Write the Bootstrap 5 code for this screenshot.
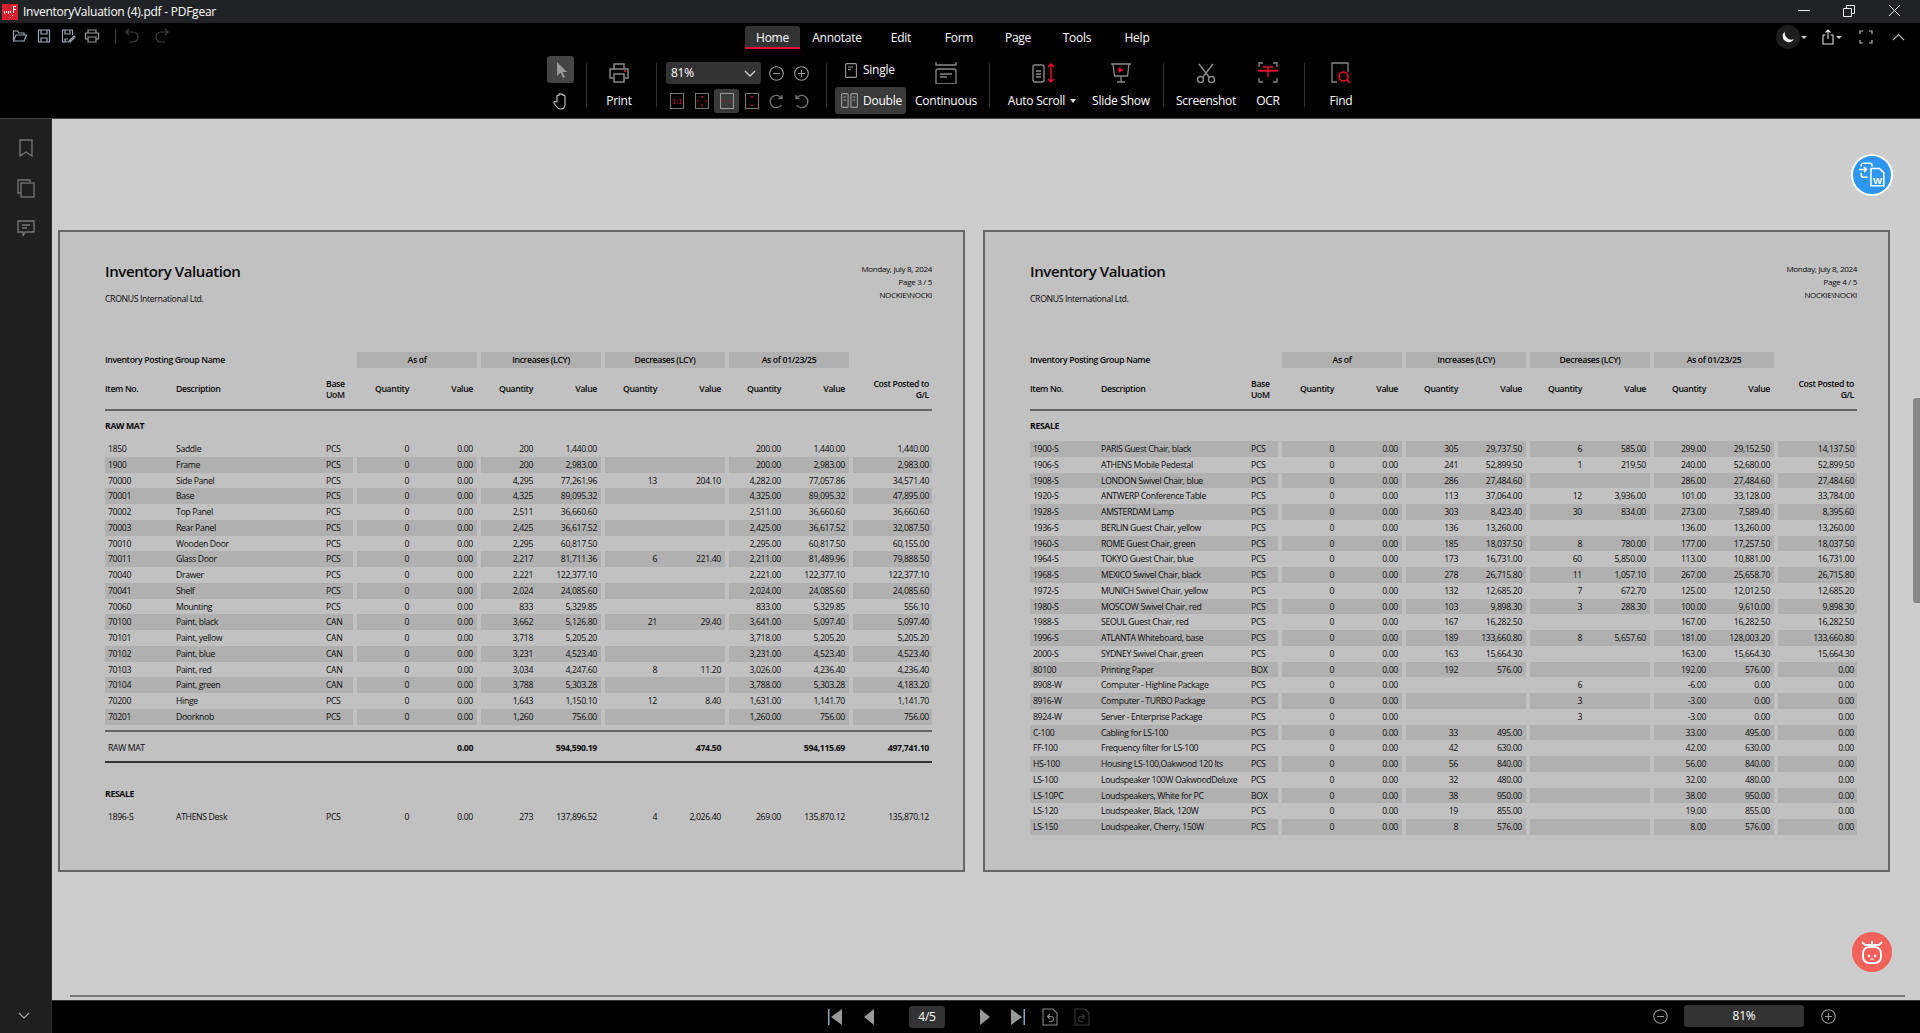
<!DOCTYPE html>
<html lang="en">

<head>
    <meta charset="UTF-8" />
    <title>InventoryValuation (4).pdf - PDFgear</title>
    <link href="https://cdn.jsdelivr.net/npm/bootstrap@5.3.2/dist/css/bootstrap.min.css" rel="stylesheet" />
    <style>
        html, body { height: 100%; }
        body { background: #000; color: #fff; font-family: "Open Sans", "Liberation Sans", sans-serif; font-size: 12px; letter-spacing: -.25px; overflow: hidden; }
        svg { display: block; }

        /* title bar */
        .title-bar { height: 23px; background: #1f2325; padding-left: 2px; }
        .title-text { font-size: 12px; margin-left: 5px; white-space: nowrap; }
        .win-btn { position: absolute; top: 3px; }
        .win-min { left: 1797px; }
        .win-max { left: 1842px; }
        .win-close { left: 1887px; }

        /* top area */
        .tool-area { height: 96px; background: #000; border-bottom: 1px solid #444; }
        .menu-row { height: 27px; }
        .quick { width: 745px; padding-left: 12px; padding-top: 5px; }
        .quick-btn { width: 24px; }
        .quick-sep { width: 1px; height: 15px; background: #444; margin: 1px 8px 0 7px; }
        .quick-wide { width: 30px; }
        .menu-tabs { margin-top: 3px; flex-wrap: nowrap; }
        .menu-tabs .nav-link { color: #fff; padding: 1px 0 0; height: 23px; line-height: 22px; text-align: center; font-size: 12px; }
        .menu-tabs .nav-link.active { background: #333; border-bottom: 2px solid #e8112d; border-radius: 3px 3px 0 0; }
        .tab-home { width: 55px; }
        .tab-annotate { width: 74px; }
        .tab-edit { width: 54px; }
        .tab-form { width: 62px; }
        .tab-page { width: 56px; }
        .tab-tools { width: 62px; }
        .tab-help { width: 58px; }
        .right-tools { position: absolute; top: 3px; left: 1776px; height: 22px; }
        .moon-btn { width: 24px; height: 24px; border-radius: 50%; background: #1d1d1d; }
        .caret-mini { width: 0; height: 0; flex: none; margin-left: 1px; border: 3px solid transparent; border-top: 3px solid #ccc; border-bottom: 0; }
        .share-icon { margin-left: 14px; }
        .full-icon { margin-left: 17px; }
        .up-icon { margin-left: 19px; }

        /* ribbon */
        .ribbon { height: 68px; padding-left: 547px; }
        .rb-sep { width: 1px; height: 44px; margin-top: 13px; background: #333; flex: none; }
        .rb-item { flex: none; height: 68px; padding-top: 12px; }
        .rb-icon { height: 22px; }
        .rb-label { margin-top: 8px; line-height: 18px; white-space: nowrap; }
        .rb-tools { width: 27px; margin-right: 12px; flex: none; padding-top: 6px; }
        .pointer-btn { width: 27px; height: 27px; background: #444; border-radius: 3px; }
        .hand-btn { height: 24px; margin-top: 6px; }
        .rb-print { width: 46px; margin: 0 14px 0 9px; }
        .rb-zoom { width: 150px; margin: 0 12px 0 7px; flex: none; padding-top: 12px; }
        .zoom-select { width: 95px; height: 22px; flex: none; margin-left: 2px; margin-right: 5px; padding: 0 5px; background: #333; border-radius: 3px; }
        .zoom-circle { width: 20px; flex: none; margin-right: 5px; }
        .zoom-modes { margin-top: 5px; }
        .mode-btn { width: 25px; height: 24px; border-radius: 3px; }
        .mode-btn.on { background: #3a3a3a; }
        .rb-view { width: 71px; margin-left: 8px; flex: none; padding-top: 9px; }
        .view-single { height: 22px; padding-left: 10px; gap: 6px; }
        .view-double { height: 27px; margin-top: 6px; padding-left: 6px; gap: 5px; background: #3a3a3a; border-radius: 3px; }
        .rb-cont { width: 80px; margin-right: 3px; }
        .rb-auto { width: 78px; margin-left: 13px; }
        .rb-slide { width: 62px; margin: 0 11px 0 9px; }
        .rb-shot { width: 58px; margin-left: 13px; }
        .rb-ocr { width: 24px; margin: 0 24px 0 21px; }
        .rb-find { width: 22px; margin-left: 25px; }
        .caret-auto { display: inline-block; width: 0; height: 0; margin-left: 5px; vertical-align: 2px; border: 3px solid transparent; border-top: 4px solid #ddd; border-bottom: 0; }

        /* sidebar and canvas */
        .side-bar { width: 52px; flex: none; background: #1f1f1f; border-right: 1px solid #333; padding-top: 18px; gap: 18.500px; position: relative; }
        .side-btn { height: 22px; }
        .side-down { position: absolute; bottom: 13px; left: 18px; }
        .canvas-area { height: 881px; background: #cdcdcd; padding: 111px 0 0 6px; gap: 18px; position: relative; overflow: hidden; }
        .h-scroll { position: absolute; left: 18px; right: 15px; bottom: 3px; height: 2px; background: #777; }
        .v-scroll { position: absolute; right: 0; top: 279px; width: 7px; height: 205px; background: #888; border-radius: 3px 0 0 3px; }
        .float-blue { position: absolute; left: 1799px; top: 35px; width: 42px; height: 42px; border-radius: 50%; background: #2d96f0; border: 2px solid #fff; }
        .float-red { position: absolute; left: 1800px; top: 813px; width: 40px; height: 40px; border-radius: 50%; background: #f4605a; }

        /* pdf pages */
        .pdf-page { width: 907px; height: 642px; flex: none; background: #c1c1c1; border: 2px solid #666; padding-left: 45px; color: #0a0a0a; font-size: 8.7px; letter-spacing: -.35px; line-height: 12px; }
        .pdf-sheet { width: 827px; }
        .pdf-head { height: 120px; padding-top: 29px; }
        .pdf-title { font-size: 15px; letter-spacing: -.4px; line-height: 20px; font-weight: 600; }
        .pdf-company { margin-top: 12px; }
        .pdf-meta { padding-top: 1px; line-height: 13px; font-size: 8px; letter-spacing: -.3px; }
        .tbl-row { display: flex; gap: 4px; height: 15.76px; line-height: 17.5px; white-space: nowrap; }
        .grp-info { width: 248px; flex: none; display: flex; }
        .grp-num { width: 120px; flex: none; display: flex; }
        .grp-cost { width: 79px; flex: none; padding-right: 3px; text-align: right; }
        .cell-no { width: 71px; padding-left: 3px; flex: none; }
        .cell-desc { width: 150px; flex: none; }
        .cell-uom { width: 27px; flex: none; }
        .cell-q { width: 56px; padding-right: 4px; text-align: right; flex: none; }
        .cell-v { width: 64px; padding-right: 4px; text-align: right; flex: none; }
        .tbl-row.shaded .grp-info, .tbl-row.shaded .grp-num, .tbl-row.shaded .grp-cost { background: #b0b0b0; }
        .group-head { height: 16px; line-height: 16px; font-weight: 600; }
        .group-cap { width: 120px; flex: none; background: #b0b0b0; text-align: center; }
        .group-name { width: 248px; flex: none; }
        .col-head { height: 41px; padding-top: 2px; display: flex; gap: 4px; align-items: center; font-weight: 600; line-height: 11px; }
        .col-head .cell-no { padding-left: 0; }
        .rule-thick { height: 2px; background: #666; }
        .rule-black { height: 2px; background: #333; }
        .sec-name { height: 30px; line-height: 30px; font-weight: 700; }
        .sec-after { margin-top: 16px; }
        .sum-top { margin-top: 5.5px; }
        .sum-row { height: 29px; line-height: 32px; }
        .sum-row b { font-weight: 700; }

        /* bottom bar */
        .bottom-bar { height: 33px; background: #000; border-top: 1px solid #333; position: relative; padding-left: 773px; }
        .nav-slot { width: 20px; flex: none; }
        .nav-prev { margin-left: 15px; }
        .nav-page { width: 36px; height: 22px; margin: 0 29px; flex: none; background: #333; border-radius: 3px; text-align: center; line-height: 22px; font-size: 12px; }
        .nav-last { margin-left: 14px; }
        .nav-doc { margin-left: 14px; }
        .nav-doc2 { margin-left: 12px; }
        .zoom-foot { position: absolute; left: 1598px; top: 4px; gap: 14px; }
        .zoom-box { width: 120px; height: 22px; background: #333; border-radius: 3px; text-align: center; line-height: 22px; font-size: 12px; }
    </style>
</head>

<body class="d-flex flex-column">
    <div class="title-bar d-flex align-items-center position-relative">
        <svg width="16" height="16" viewBox="0 0 16 16">
            <rect width="16" height="16" fill="#d9202c" />
            <path d="M2 7h1v3H2zM4 7h1v2H4zM6 7h1v3H6zM8 7h1v2H8zM11 2h3v1h-2v2h2v1h-2v3h-1zM8 13h1v1H8zM10 11h1v1h-1z" fill="#fff" />
        </svg>
        <span class="title-text">InventoryValuation (4).pdf - PDFgear</span>
        <svg class="win-btn win-min" width="16" height="16" viewBox="0 0 16 16"><path d="M1 7.5h12" stroke="#eee" fill="none" /></svg>
        <svg class="win-btn win-max" width="16" height="16" viewBox="0 0 16 16"><path d="M1.5 5.5h8v8h-8zM4.5 5V2.5h8v8H10" stroke="#eee" fill="none" /></svg>
        <svg class="win-btn win-close" width="16" height="16" viewBox="0 0 16 16"><path d="M2 2l11 11M13 2L2 13" stroke="#eee" fill="none" /></svg>
    </div>

    <div class="tool-area position-relative">
        <div class="menu-row d-flex">
            <div class="quick d-flex">
                <div class="quick-btn"><svg width="16" height="16" viewBox="0 0 16 16" fill="none" stroke="#9aa7b5" stroke-width="1.2"><path d="M1.5 13V3h4l1.5 2h5v2M1.5 13l2.5-6h10.5L12 13z" /></svg></div>
                <div class="quick-btn"><svg width="16" height="16" viewBox="0 0 16 16" fill="none" stroke="#9aa7b5" stroke-width="1.2"><path d="M2.5 2h11v12h-11zM5 2v4h6V2M5 14v-4h6v4" /></svg></div>
                <div class="quick-btn"><svg width="16" height="16" viewBox="0 0 16 16" fill="none" stroke="#9aa7b5" stroke-width="1.2"><path d="M9 14H2.5V2h10v5M5 2v4h5V2M5 14v-3h3M10 14l5-5-1-1-5 5z" /></svg></div>
                <div class="quick-btn"><svg width="16" height="16" viewBox="0 0 16 16" fill="none" stroke="#9a9a9a" stroke-width="1.2"><path d="M4 5V2h8v3M4 11H1.5V5h13v6H12M4 9h8v5H4z" /></svg></div>
                <div class="quick-sep"></div>
                <div class="quick-wide"><svg width="16" height="16" viewBox="0 0 16 16" fill="none" stroke="#3f3f3f" stroke-width="1.2"><path d="M5 1L2 4l3 3M2 4h7a4.5 4.5 0 0 1 0 10H5" /></svg></div>
                <div class="quick-wide"><svg width="16" height="16" viewBox="0 0 16 16" fill="none" stroke="#3f3f3f" stroke-width="1.2"><path d="M11 1l3 3-3 3M14 4H7a4.5 4.5 0 0 0 0 10h4" /></svg></div>
            </div>
            <ul class="nav menu-tabs">
                <li class="nav-item"><a class="nav-link active tab-home" href="#">Home</a></li>
                <li class="nav-item"><a class="nav-link tab-annotate" href="#">Annotate</a></li>
                <li class="nav-item"><a class="nav-link tab-edit" href="#">Edit</a></li>
                <li class="nav-item"><a class="nav-link tab-form" href="#">Form</a></li>
                <li class="nav-item"><a class="nav-link tab-page" href="#">Page</a></li>
                <li class="nav-item"><a class="nav-link tab-tools" href="#">Tools</a></li>
                <li class="nav-item"><a class="nav-link tab-help" href="#">Help</a></li>
            </ul>
            <div class="right-tools d-flex align-items-center">
                <div class="moon-btn d-flex align-items-center justify-content-center"><svg width="16" height="16" viewBox="0 0 16 16"><path d="M5 2.5a6 6 0 1 0 9 7.5A6.5 6.5 0 0 1 5 2.5z" fill="#eee" /></svg></div>
                <div class="caret-mini"></div>
                <svg class="share-icon" width="14" height="16" viewBox="0 0 14 16" fill="none" stroke="#ddd" stroke-width="1.1"><path d="M7 10V1M4.5 3.5L7 1l2.5 2.5M4.5 6H2v9h10V6H9.5" /></svg>
                <div class="caret-mini"></div>
                <svg class="full-icon" width="14" height="14" viewBox="0 0 14 14" fill="none" stroke="#bbb" stroke-width="1.2"><path d="M1 4V1h3M10 1h3v3M13 10v3h-3M4 13H1v-3" /></svg>
                <svg class="up-icon" width="13" height="8" viewBox="0 0 13 8" fill="none" stroke="#bbb" stroke-width="1.1"><path d="M1 7l5.500-5.500L12 7" /></svg>
            </div>
        </div>

        <div class="ribbon d-flex">
            <div class="rb-tools">
                <div class="pointer-btn d-flex align-items-center justify-content-center"><svg width="18" height="20" viewBox="0 0 18 20"><path d="M5 2v14l3.500-3.500L11 18l2-1-2.500-5H15z" fill="#999" /></svg></div>
                <div class="hand-btn d-flex align-items-center justify-content-center"><svg width="18" height="19" viewBox="0 0 18 19" fill="none" stroke="#bbb" stroke-width="1.2"><path d="M5 10V4a1 1 0 0 1 2 0V2.500a1 1 0 0 1 2 0V3a1 1 0 0 1 2 0v1a1 1 0 0 1 2 0v8c0 3-1.500 5-4 5H8c-2 0-3-1.500-4-3l-2-3c-.5-1 .8-2 1.700-1z" /></svg></div>
            </div>
            <div class="rb-sep"></div>
            <div class="rb-item rb-print d-flex flex-column align-items-center">
                <div class="rb-icon"><svg width="22" height="22" viewBox="0 0 22 22" fill="none" stroke="#888" stroke-width="1.500"><path d="M6 7V2h10v5M6 16H2V7h18v9h-4M6 12h10v8H6z" /><path d="M16 9h2" stroke="#e8112d" /></svg></div>
                <div class="rb-label">Print</div>
            </div>
            <div class="rb-sep"></div>
            <div class="rb-zoom">
                <div class="d-flex">
                    <div class="zoom-select d-flex align-items-center justify-content-between">
                        <span>81%</span>
                        <svg width="12" height="7" viewBox="0 0 12 7" fill="none" stroke="#ccc" stroke-width="1.3"><path d="M1 1l5 5 5-5" /></svg>
                    </div>
                    <div class="zoom-circle d-flex align-items-center justify-content-center"><svg width="15" height="15" viewBox="0 0 15 15" fill="none" stroke="#999" stroke-width="1.1"><circle cx="7.500" cy="7.500" r="6.800" /><path d="M4 7.500h7" /></svg></div>
                    <div class="zoom-circle d-flex align-items-center justify-content-center"><svg width="15" height="15" viewBox="0 0 15 15" fill="none" stroke="#999" stroke-width="1.1"><circle cx="7.500" cy="7.500" r="6.800" /><path d="M4 7.500h7M7.500 4v7" /></svg></div>
                </div>
                <div class="zoom-modes d-flex">
                    <div class="mode-btn d-flex align-items-center justify-content-center"><svg width="14" height="16" viewBox="0 0 14 16"><rect x=".5" y=".5" width="13" height="15" fill="none" stroke="#777" /><text x="7" y="11" text-anchor="middle" font-size="8" font-family="Liberation Sans" fill="#c8102a">1:1</text></svg></div>
                    <div class="mode-btn d-flex align-items-center justify-content-center"><svg width="14" height="16" viewBox="0 0 14 16"><rect x=".5" y=".5" width="13" height="15" fill="none" stroke="#777" /><path d="M6 3h2v1.500H6zM6 11.500h2V13H6zM2.500 7.200H4v1.600H2.500zM10 7.200h1.500v1.600H10z" fill="#b00f25" /></svg></div>
                    <div class="mode-btn on d-flex align-items-center justify-content-center"><svg width="14" height="16" viewBox="0 0 14 16"><rect x=".5" y=".5" width="13" height="15" fill="none" stroke="#999" /><path d="M2.500 7.200H4v1.600H2.500zM10 7.200h1.500v1.600H10z" fill="#b00f25" /></svg></div>
                    <div class="mode-btn d-flex align-items-center justify-content-center"><svg width="14" height="16" viewBox="0 0 14 16"><rect x=".5" y=".5" width="13" height="15" fill="none" stroke="#777" /><path d="M6 3h2v1.500H6zM6 11.500h2V13H6z" fill="#b00f25" /></svg></div>
                    <div class="mode-btn d-flex align-items-center justify-content-center"><svg width="15" height="15" viewBox="0 0 15 15" fill="none" stroke="#777" stroke-width="1.300"><path d="M12.500 11a6.200 6.200 0 1 1 0-7M13 1v3.500H9.500" /></svg></div>
                    <div class="mode-btn d-flex align-items-center justify-content-center"><svg width="15" height="15" viewBox="0 0 15 15" fill="none" stroke="#777" stroke-width="1.300"><path d="M2.500 11a6.200 6.200 0 1 0 0-7M2 1v3.500h3.500" /></svg></div>
                </div>
            </div>
            <div class="rb-sep"></div>
            <div class="rb-view">
                <div class="view-single d-flex align-items-center">
                    <svg width="12" height="15" viewBox="0 0 12 15" fill="none" stroke="#999" stroke-width="1.100"><rect x=".6" y=".6" width="10.800" height="13.800" rx="1" /><path d="M3 4h5M3 6.500h3" /></svg>
                    <span>Single</span>
                </div>
                <div class="view-double d-flex align-items-center">
                    <svg width="17" height="15" viewBox="0 0 17 15" fill="none" stroke="#999" stroke-width="1.100"><rect x=".6" y=".6" width="6.500" height="13.800" rx="1" /><rect x="9.900" y=".6" width="6.500" height="13.800" rx="1" /><path d="M2.500 4h2.500M2.500 7h2.500M11.800 4h2.500M11.800 7h2.500" /></svg>
                    <span>Double</span>
                </div>
            </div>
            <div class="rb-item rb-cont d-flex flex-column align-items-center">
                <div class="rb-icon"><svg width="24" height="22" viewBox="0 0 24 22" fill="none" stroke="#888" stroke-width="1.300"><path d="M2 0v3h20V0M2 22v-13a2 2 0 0 1 2-2h16a2 2 0 0 1 2 2v13zM6 12h12M6 15h7" /></svg></div>
                <div class="rb-label">Continuous</div>
            </div>
            <div class="rb-sep"></div>
            <div class="rb-item rb-auto d-flex flex-column align-items-center">
                <div class="rb-icon ps-1"><svg width="24" height="22" viewBox="0 0 24 22" fill="none" stroke="#888" stroke-width="1.400"><rect x="1" y="3" width="11" height="17" rx="2" /><path d="M4 9h5M4 12h5M4 15h5" /><path d="M19 2v18M16 5l3-3 3 3M16 17l3 3 3-3" stroke="#e8112d" /></svg></div>
                <div class="rb-label">Auto Scroll<span class="caret-auto"></span></div>
            </div>
            <div class="rb-item rb-slide d-flex flex-column align-items-center">
                <div class="rb-icon"><svg width="22" height="22" viewBox="0 0 22 22" fill="none" stroke="#888" stroke-width="1.300"><path d="M1 2h20M3 2l1.500 12h13L19 2M11 14v6M7 20h8" /><path d="M8.500 5v6l5-3z" fill="#e8112d" stroke="none" /></svg></div>
                <div class="rb-label">Slide Show</div>
            </div>
            <div class="rb-sep"></div>
            <div class="rb-item rb-shot d-flex flex-column align-items-center">
                <div class="rb-icon"><svg width="20" height="22" viewBox="0 0 20 22" fill="none" stroke="#888" stroke-width="1.500"><path d="M3 2l10 13M17 2L7 15" /><circle cx="4.500" cy="17.500" r="3" /><circle cx="15.500" cy="17.500" r="3" /></svg></div>
                <div class="rb-label">Screenshot</div>
            </div>
            <div class="rb-item rb-ocr d-flex flex-column align-items-center">
                <div class="rb-icon"><svg width="20" height="22" viewBox="0 0 20 22" fill="none" stroke="#888" stroke-width="1.300"><path d="M1 5V1h4M15 1h4v4M19 16v4h-4M5 20H1v-4" /><path d="M0 8h20v2H0z" fill="#8c1420" stroke="none" /><path d="M0 8.500h20M5 5h10M10 5v10" stroke="#e8112d" /></svg></div>
                <div class="rb-label">OCR</div>
            </div>
            <div class="rb-sep"></div>
            <div class="rb-item rb-find d-flex flex-column align-items-center">
                <div class="rb-icon"><svg width="20" height="22" viewBox="0 0 20 22" fill="none" stroke="#888" stroke-width="1.300"><path d="M6 20H1V1h16v9" /><circle cx="12.500" cy="14.500" r="4.500" stroke="#e8112d" stroke-width="1.600" /><path d="M16 18l3 3" stroke="#e8112d" stroke-width="1.600" /></svg></div>
                <div class="rb-label">Find</div>
            </div>
        </div>
    </div>

    <div class="d-flex flex-grow-1">
        <aside class="side-bar d-flex flex-column align-items-center">
            <div class="side-btn d-flex align-items-center"><svg width="16" height="20" viewBox="0 0 16 20" fill="none" stroke="#777" stroke-width="1.300"><path d="M2 2h12v16l-6-4-6 4z" /></svg></div>
            <div class="side-btn d-flex align-items-center"><svg width="18" height="19" viewBox="0 0 18 19" fill="none" stroke="#777" stroke-width="1.300"><path d="M13 3V1H1v13h3" /><rect x="4" y="4" width="13" height="14" /></svg></div>
            <div class="side-btn d-flex align-items-center"><svg width="18" height="18" viewBox="0 0 18 18" fill="none" stroke="#777" stroke-width="1.300"><path d="M1 1h16v11H8l-2 4v-4H1zM5 5h8M5 8h5" /></svg></div>
            <svg class="side-down" width="12" height="8" viewBox="0 0 12 8" fill="none" stroke="#aaa" stroke-width="1.100"><path d="M1 1l5 5 5-5" /></svg>
        </aside>
        <div class="flex-grow-1 d-flex flex-column">
            <main class="canvas-area d-flex" id="canvas">
                <div class="h-scroll"></div>
                <div class="v-scroll"></div>
                <div class="float-blue d-flex align-items-center justify-content-center">
                    <svg width="28" height="26" viewBox="0 0 26 24" fill="none" stroke="#fff" stroke-width="1.400"><path d="M1 7h7M5.500 4.500L8 7l-2.500 2.500M3 4V3a2 2 0 0 1 2-2h6a2 2 0 0 1 2 2v1M3 10v2a2 2 0 0 0 2 2h4" /><path d="M12 6h8l4 4v12H12z" /><text x="18" y="20" text-anchor="middle" font-size="9" font-weight="700" font-family="Liberation Sans" fill="#fff" stroke="none">W</text></svg>
                </div>
                <div class="float-red d-flex align-items-center justify-content-center">
                    <svg width="26" height="26" viewBox="0 0 26 26" fill="none" stroke="#fff" stroke-width="2"><rect x="4" y="8" width="18" height="16" rx="6" /><path d="M3 3l3 3h14l3-3M13 2v3" stroke-width="1.800" /><path d="M10 17h0M16 17h0" stroke-linecap="round" stroke-width="2.400" /><path d="M11.500 20h3" stroke-width="1.300" /></svg>
                </div>
            </main>
            <footer class="bottom-bar d-flex align-items-center">
                <div class="nav-slot"><svg width="20" height="18" viewBox="0 0 20 18"><path d="M3 1h1.500v16H3z" fill="#8fa6c4" /><path d="M17 1v16L6 9z" fill="#999" /></svg></div>
                <div class="nav-slot nav-prev"><svg width="20" height="18" viewBox="0 0 20 18"><path d="M14 1v16L4 9z" fill="#999" /></svg></div>
                <div class="nav-page">4/5</div>
                <div class="nav-slot"><svg width="20" height="18" viewBox="0 0 20 18"><path d="M6 1v16l10-8z" fill="#999" /></svg></div>
                <div class="nav-slot nav-last"><svg width="20" height="18" viewBox="0 0 20 18"><path d="M3 1v16l11-8z" fill="#999" /><path d="M15.500 1H17v16h-1.500z" fill="#8fa6c4" /></svg></div>
                <div class="nav-slot nav-doc"><svg width="16" height="18" viewBox="0 0 16 18" fill="none" stroke="#888" stroke-width="1.100"><path d="M1 1h10l4 4v12H1zM8 6L5.500 8.500 8 11M5.500 8.500H9a2.500 2.500 0 0 1 0 5H7" /></svg></div>
                <div class="nav-slot nav-doc2"><svg width="16" height="18" viewBox="0 0 16 18" fill="none" stroke="#3a3a3a" stroke-width="1.100"><path d="M1 1h10l4 4v12H1zM8 6l2.500 2.500L8 11M10.500 8.500H7a2.500 2.500 0 0 0 0 5h2" /></svg></div>
                <div class="zoom-foot d-flex align-items-center">
                    <div class="nav-slot d-flex justify-content-center"><svg width="15" height="15" viewBox="0 0 15 15" fill="none" stroke="#999" stroke-width="1.1"><circle cx="7.500" cy="7.500" r="6.800" /><path d="M4 7.500h7" /></svg></div>
                    <div class="zoom-box">81%</div>
                    <div class="nav-slot d-flex justify-content-center"><svg width="15" height="15" viewBox="0 0 15 15" fill="none" stroke="#999" stroke-width="1.1"><circle cx="7.500" cy="7.500" r="6.800" /><path d="M4 7.500h7M7.500 4v7" /></svg></div>
                </div>
            </footer>
        </div>
    </div>

    <script src="https://cdn.jsdelivr.net/npm/bootstrap@5.3.2/dist/js/bootstrap.bundle.min.js"></script>
    <script>
        // no|desc|uom|incQty|incVal|decQty|decVal|endQty|endVal|cost
        const RAW_MAT = [
            '1850|Saddle|PCS|200|1,440.00|||200.00|1,440.00|1,440.00',
            '1900|Frame|PCS|200|2,983.00|||200.00|2,983.00|2,983.00',
            '70000|Side Panel|PCS|4,295|77,261.96|13|204.10|4,282.00|77,057.86|34,571.40',
            '70001|Base|PCS|4,325|89,095.32|||4,325.00|89,095.32|47,895.00',
            '70002|Top Panel|PCS|2,511|36,660.60|||2,511.00|36,660.60|36,660.60',
            '70003|Rear Panel|PCS|2,425|36,617.52|||2,425.00|36,617.52|32,087.50',
            '70010|Wooden Door|PCS|2,295|60,817.50|||2,295.00|60,817.50|60,155.00',
            '70011|Glass Door|PCS|2,217|81,711.36|6|221.40|2,211.00|81,489.96|79,888.50',
            '70040|Drawer|PCS|2,221|122,377.10|||2,221.00|122,377.10|122,377.10',
            '70041|Shelf|PCS|2,024|24,085.60|||2,024.00|24,085.60|24,085.60',
            '70060|Mounting|PCS|833|5,329.85|||833.00|5,329.85|556.10',
            '70100|Paint, black|CAN|3,662|5,126.80|21|29.40|3,641.00|5,097.40|5,097.40',
            '70101|Paint, yellow|CAN|3,718|5,205.20|||3,718.00|5,205.20|5,205.20',
            '70102|Paint, blue|CAN|3,231|4,523.40|||3,231.00|4,523.40|4,523.40',
            '70103|Paint, red|CAN|3,034|4,247.60|8|11.20|3,026.00|4,236.40|4,236.40',
            '70104|Paint, green|CAN|3,788|5,303.28|||3,788.00|5,303.28|4,183.20',
            '70200|Hinge|PCS|1,643|1,150.10|12|8.40|1,631.00|1,141.70|1,141.70',
            '70201|Doorknob|PCS|1,260|756.00|||1,260.00|756.00|756.00'
        ];
        const RESALE_P3 = ['1896-S|ATHENS Desk|PCS|273|137,896.52|4|2,026.40|269.00|135,870.12|135,870.12'];
        const RESALE_P4 = [
            '1900-S|PARIS Guest Chair, black|PCS|305|29,737.50|6|585.00|299.00|29,152.50|14,137.50',
            '1906-S|ATHENS Mobile Pedestal|PCS|241|52,899.50|1|219.50|240.00|52,680.00|52,899.50',
            '1908-S|LONDON Swivel Chair, blue|PCS|286|27,484.60|||286.00|27,484.60|27,484.60',
            '1920-S|ANTWERP Conference Table|PCS|113|37,064.00|12|3,936.00|101.00|33,128.00|33,784.00',
            '1928-S|AMSTERDAM Lamp|PCS|303|8,423.40|30|834.00|273.00|7,589.40|8,395.60',
            '1936-S|BERLIN Guest Chair, yellow|PCS|136|13,260.00|||136.00|13,260.00|13,260.00',
            '1960-S|ROME Guest Chair, green|PCS|185|18,037.50|8|780.00|177.00|17,257.50|18,037.50',
            '1964-S|TOKYO Guest Chair, blue|PCS|173|16,731.00|60|5,850.00|113.00|10,881.00|16,731.00',
            '1968-S|MEXICO Swivel Chair, black|PCS|278|26,715.80|11|1,057.10|267.00|25,658.70|26,715.80',
            '1972-S|MUNICH Swivel Chair, yellow|PCS|132|12,685.20|7|672.70|125.00|12,012.50|12,685.20',
            '1980-S|MOSCOW Swivel Chair, red|PCS|103|9,898.30|3|288.30|100.00|9,610.00|9,898.30',
            '1988-S|SEOUL Guest Chair, red|PCS|167|16,282.50|||167.00|16,282.50|16,282.50',
            '1996-S|ATLANTA Whiteboard, base|PCS|189|133,660.80|8|5,657.60|181.00|128,003.20|133,660.80',
            '2000-S|SYDNEY Swivel Chair, green|PCS|163|15,664.30|||163.00|15,664.30|15,664.30',
            '80100|Printing Paper|BOX|192|576.00|||192.00|576.00|0.00',
            '8908-W|Computer - Highline Package|PCS|||6||-6.00|0.00|0.00',
            '8916-W|Computer - TURBO Package|PCS|||3||-3.00|0.00|0.00',
            '8924-W|Server - Enterprise Package|PCS|||3||-3.00|0.00|0.00',
            'C-100|Cabling for LS-100|PCS|33|495.00|||33.00|495.00|0.00',
            'FF-100|Frequency filter for LS-100|PCS|42|630.00|||42.00|630.00|0.00',
            'HS-100|Housing LS-100,Oakwood 120 lts|PCS|56|840.00|||56.00|840.00|0.00',
            'LS-100|Loudspeaker 100W OakwoodDeluxe|PCS|32|480.00|||32.00|480.00|0.00',
            'LS-10PC|Loudspeakers, White for PC|BOX|38|950.00|||38.00|950.00|0.00',
            'LS-120|Loudspeaker, Black, 120W|PCS|19|855.00|||19.00|855.00|0.00',
            'LS-150|Loudspeaker, Cherry, 150W|PCS|8|576.00|||8.00|576.00|0.00'
        ];

        function numGroup(q, v) {
            return `<div class="grp-num"><div class="cell-q">${q}</div><div class="cell-v">${v}</div></div>`;
        }

        function itemRow(line, shaded) {
            const f = line.split('|');
            return `<div class="tbl-row${shaded ? ' shaded' : ''}">
                        <div class="grp-info"><div class="cell-no">${f[0]}</div><div class="cell-desc">${f[1]}</div><div class="cell-uom">${f[2]}</div></div>
                        ${numGroup('0', '0.00')}${numGroup(f[3], f[4])}${numGroup(f[5], f[6])}${numGroup(f[7], f[8])}
                        <div class="grp-cost">${f[9]}</div>
                    </div>`;
        }

        function pageHtml(pageNo, body) {
            return `<section class="pdf-page"><div class="pdf-sheet">
                <div class="pdf-head d-flex justify-content-between">
                    <div><div class="pdf-title">Inventory Valuation</div><div class="pdf-company">CRONUS International Ltd.</div></div>
                    <div class="pdf-meta text-end"><div>Monday, July 8, 2024</div><div>Page ${pageNo} / 5</div><div>NOCKIE\\NOCKI</div></div>
                </div>
                <div class="tbl-row group-head">
                    <div class="group-name">Inventory Posting Group Name</div>
                    <div class="group-cap">As of</div><div class="group-cap">Increases (LCY)</div>
                    <div class="group-cap">Decreases (LCY)</div><div class="group-cap">As of 01/23/25</div>
                </div>
                <div class="col-head">
                    <div class="grp-info align-items-center"><div class="cell-no">Item No.</div><div class="cell-desc">Description</div><div class="cell-uom">Base<br>UoM</div></div>
                    ${numGroup('Quantity', 'Value').repeat(4)}
                    <div class="grp-cost">Cost Posted to<br>G/L</div>
                </div>
                <div class="rule-thick"></div>
                ${body}
            </div></section>`;
        }

        const page3 = `<div class="sec-name">RAW MAT</div>
            ${RAW_MAT.map((l, i) => itemRow(l, i % 2 === 1)).join('')}
            <div class="rule-thick sum-top"></div>
            <div class="tbl-row sum-row">
                <div class="grp-info"><div class="cell-no">RAW MAT</div></div>
                ${numGroup('', '<b>0.00</b>')}${numGroup('', '<b>594,590.19</b>')}${numGroup('', '<b>474.50</b>')}${numGroup('', '<b>594,115.69</b>')}
                <div class="grp-cost"><b>497,741.10</b></div>
            </div>
            <div class="rule-black"></div>
            <div class="sec-name sec-after">RESALE</div>
            ${RESALE_P3.map(l => itemRow(l, false)).join('')}`;

        const page4 = `<div class="sec-name">RESALE</div>
            ${RESALE_P4.map((l, i) => itemRow(l, i % 2 === 0)).join('')}`;

        document.getElementById('canvas').insertAdjacentHTML('afterbegin', pageHtml(3, page3) + pageHtml(4, page4));
    </script>
</body>

</html>
